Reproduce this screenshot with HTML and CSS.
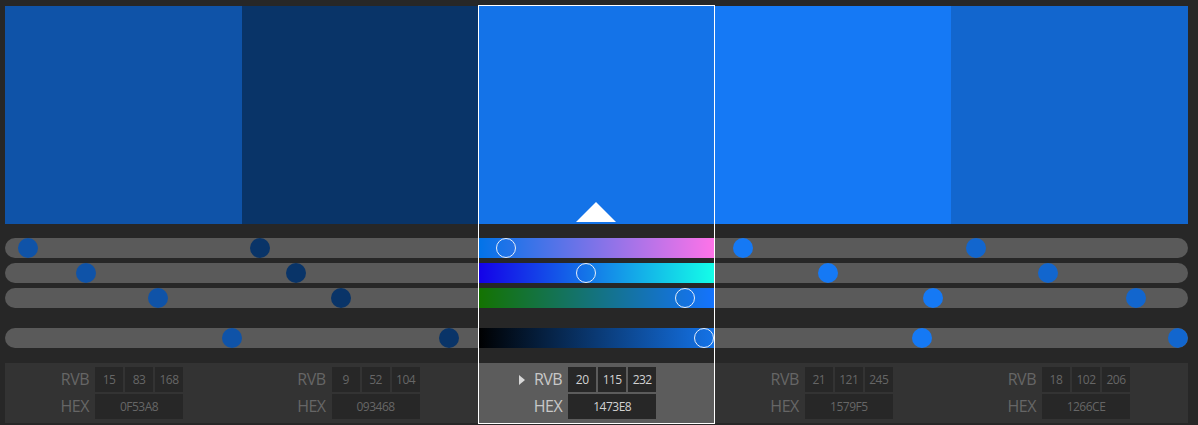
FILE: index.html
```html
<!DOCTYPE html>
<html lang="fr">
<head>
<meta charset="utf-8">
<title>Palette</title>
<link rel="stylesheet" href="styles.css">
</head>
<body>
<main class="palette">
  <div class="swatches">
    <div class="swatch c1"></div>
    <div class="swatch c2"></div>
    <div class="swatch c3"><span class="caret"></span></div>
    <div class="swatch c4"></div>
    <div class="swatch c5"></div>
  </div>
  <div class="sliders">
    <div class="track">
      <div class="cell"><span class="knob c1" style="left:23px"></span></div>
      <div class="cell"><span class="knob c2" style="left:18.4px"></span></div>
      <div class="cell grad-r"><span class="knob open" style="left:27.8px"></span></div>
      <div class="cell"><span class="knob c4" style="left:28.2px"></span></div>
      <div class="cell"><span class="knob c5" style="left:24.6px"></span></div>
    </div>
    <div class="track">
      <div class="cell"><span class="knob c1" style="left:81px"></span></div>
      <div class="cell"><span class="knob c2" style="left:54.4px"></span></div>
      <div class="cell grad-g"><span class="knob open" style="left:107.8px"></span></div>
      <div class="cell"><span class="knob c4" style="left:113.2px"></span></div>
      <div class="cell"><span class="knob c5" style="left:96.6px"></span></div>
    </div>
    <div class="track">
      <div class="cell"><span class="knob c1" style="left:153px"></span></div>
      <div class="cell"><span class="knob c2" style="left:99.4px"></span></div>
      <div class="cell grad-b"><span class="knob open" style="left:206.8px"></span></div>
      <div class="cell"><span class="knob c4" style="left:218.2px"></span></div>
      <div class="cell"><span class="knob c5" style="left:184.6px"></span></div>
    </div>
    <div class="track track-value">
      <div class="cell"><span class="knob c1" style="left:227px"></span></div>
      <div class="cell"><span class="knob c2" style="left:207.4px"></span></div>
      <div class="cell grad-v"><span class="knob open" style="left:225.8px"></span></div>
      <div class="cell"><span class="knob c4" style="left:207.2px"></span></div>
      <div class="cell"><span class="knob c5" style="left:226.6px"></span></div>
    </div>
  </div>
  <div class="panels">
    <section class="panel">
      <div class="line"><span class="label">RVB</span><span class="num">15</span><span class="num">83</span><span class="num">168</span></div>
      <div class="line"><span class="label">HEX</span><span class="num hex">0F53A8</span></div>
    </section>
    <section class="panel">
      <div class="line"><span class="label">RVB</span><span class="num">9</span><span class="num">52</span><span class="num">104</span></div>
      <div class="line"><span class="label">HEX</span><span class="num hex">093468</span></div>
    </section>
    <section class="panel active">
      <div class="line"><span class="label"><i class="arrow"></i>RVB</span><span class="num">20</span><span class="num">115</span><span class="num">232</span></div>
      <div class="line"><span class="label">HEX</span><span class="num hex">1473E8</span></div>
    </section>
    <section class="panel">
      <div class="line"><span class="label">RVB</span><span class="num">21</span><span class="num">121</span><span class="num">245</span></div>
      <div class="line"><span class="label">HEX</span><span class="num hex">1579F5</span></div>
    </section>
    <section class="panel">
      <div class="line"><span class="label">RVB</span><span class="num">18</span><span class="num">102</span><span class="num">206</span></div>
      <div class="line"><span class="label">HEX</span><span class="num hex">1266CE</span></div>
    </section>
  </div>
  <div class="frame"></div>
</main>
</body>
</html>
```
FILE: styles.css
```css
* { box-sizing: border-box; }
html, body { margin: 0; height: 100%; }
body {
  background: #272727;
  padding: 6px 10px 0 5px;
  overflow: hidden;
  font-family: "Open Sans", "Noto Sans", sans-serif;
}
.palette { position: relative; height: 417px; }
.swatches, .track, .panels {
  display: grid;
  grid-template-columns: repeat(5, 1fr);
}
.swatches { height: 218px; }
.swatch { position: relative; }
.c1 { background: #0f53a8; }
.c2 { background: #093468; }
.c3 { background: #1473e8; }
.c4 { background: #1579f5; }
.c5 { background: #1266ce; }
.caret {
  position: absolute;
  left: 50%;
  bottom: 2px;
  margin-left: -20px;
  border-left: 20px solid transparent;
  border-right: 20px solid transparent;
  border-bottom: 20px solid #fff;
}
.sliders {
  display: flex;
  flex-direction: column;
  gap: 5px;
  margin-top: 14px;
}
.track {
  height: 20px;
  background: #5a5a5a;
  border-radius: 10px;
  overflow: hidden;
}
.track-value { margin-top: 15px; }
.cell { position: relative; }
.grad-r { background: linear-gradient(90deg, #0073e8, #ff73e8); }
.grad-g { background: linear-gradient(90deg, #1400e8, #14ffe8); }
.grad-b { background: linear-gradient(90deg, #147300, #1473ff); }
.grad-v { background: linear-gradient(90deg, #000, #1473e8); }
.knob {
  position: absolute;
  top: 0;
  width: 20px;
  height: 20px;
  margin-left: -10px;
  border-radius: 50%;
}
.knob.open { border: 1px solid #e8eef8; }
.panels { margin-top: 15px; height: 60px; }
.panel {
  background: #333;
  color: #666;
  padding: 4px 0;
  display: flex;
  flex-direction: column;
  gap: 2px;
}
.panel:last-child { padding-left: 0.6px; }
.line { display: flex; gap: 2px; }
.label {
  width: 84px;
  margin-right: 4px;
  display: flex;
  justify-content: flex-end;
  align-items: center;
  gap: 9px;
  font-size: 16px;
  letter-spacing: -0.5px;
  line-height: 25px;
}
.num {
  width: 28px;
  height: 25px;
  background: #272727;
  font-size: 12px;
  letter-spacing: -0.5px;
  line-height: 25px;
  text-align: center;
}
.hex { width: 88px; }
.active { background: #5c5c5c; color: #d2d2d2; }
.active .label { color: #c8c8c8; }
.arrow {
  width: 0;
  height: 0;
  border-left: 6px solid #d8d8d8;
  border-top: 5px solid transparent;
  border-bottom: 5px solid transparent;
}
.frame {
  position: absolute;
  top: -1px;
  bottom: -1px;
  left: 40%;
  width: calc(20% + 0.6px);
  border: 1px solid #fff;
}
```
